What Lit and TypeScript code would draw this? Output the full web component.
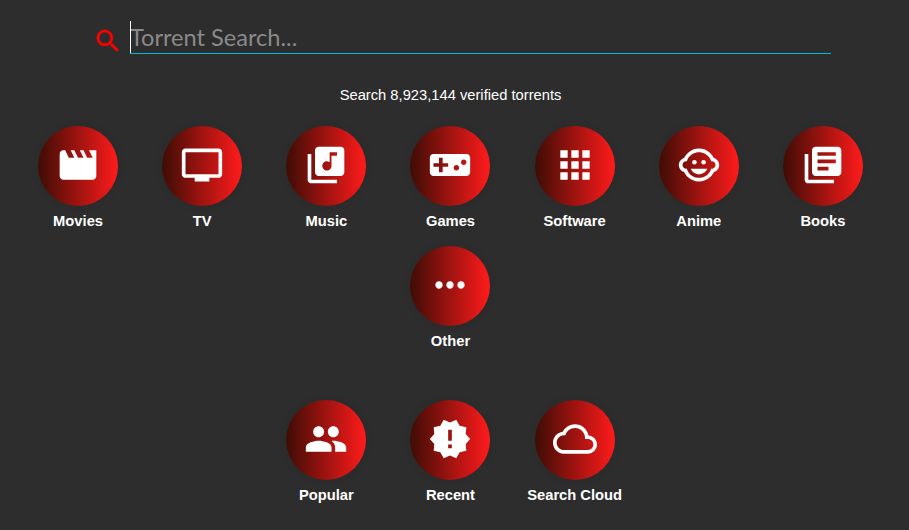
import { LitElement, html, css, svg } from "lit";
import { customElement } from "lit/decorators.js";

const P = {
  movie: svg`<path d="M18 4l2 4h-3l-2-4h-2l2 4h-3l-2-4H8l2 4H7L5 4H4c-1.1 0-1.99.9-1.99 2L2 18c0 1.1.9 2 2 2h16c1.1 0 2-.9 2-2V4h-4z"/>`,
  tv: svg`<path d="M21 3H3c-1.1 0-2 .9-2 2v12c0 1.1.9 2 2 2h5v2h8v-2h5c1.1 0 1.99-.9 1.99-2L23 5c0-1.1-.9-2-2-2zm0 14H3V5h18v12z"/>`,
  music: svg`<path d="M20 2H8c-1.1 0-2 .9-2 2v12c0 1.1.9 2 2 2h12c1.1 0 2-.9 2-2V4c0-1.1-.9-2-2-2zm-2 5h-3v5.5c0 1.38-1.12 2.5-2.5 2.5S10 13.88 10 12.5s1.12-2.5 2.5-2.5c.57 0 1.08.19 1.5.51V5h4v2zM4 6H2v14c0 1.1.9 2 2 2h14v-2H4V6z"/>`,
  games: svg`<path d="M21 6H3c-1.1 0-2 .9-2 2v8c0 1.1.9 2 2 2h18c1.1 0 2-.9 2-2V8c0-1.1-.9-2-2-2zm-10 7H8v3H6v-3H3v-2h3V8h2v3h3v2zm4.5 2c-.83 0-1.5-.67-1.5-1.5s.67-1.5 1.5-1.5 1.5.67 1.5 1.5-.67 1.5-1.5 1.5zm4-3c-.83 0-1.5-.67-1.5-1.5S18.67 9 19.5 9s1.5.67 1.5 1.5-.67 1.5-1.5 1.5z"/>`,
  apps: svg`<path d="M4 8h4V4H4v4zm6 12h4v-4h-4v4zm-6 0h4v-4H4v4zm0-6h4v-4H4v4zm6 0h4v-4h-4v4zm6-10v4h4V4h-4zm-6 4h4V4h-4v4zm6 6h4v-4h-4v4zm0 6h4v-4h-4v4z"/>`,
  child: svg`<circle cx="14.5" cy="10.5" r="1.25"/><circle cx="9.5" cy="10.5" r="1.25"/><path d="M22.94 12.66c.04-.21.06-.43.06-.66s-.02-.45-.06-.66c-.25-1.51-1.36-2.74-2.81-3.17-.53-1.12-1.28-2.1-2.19-2.91C16.36 3.85 14.28 3 12 3s-4.36.85-5.94 2.26c-.92.81-1.67 1.8-2.19 2.91-1.45.43-2.56 1.65-2.81 3.17-.04.21-.06.43-.06.66s.02.45.06.66c.25 1.51 1.36 2.74 2.81 3.17.52 1.11 1.27 2.09 2.17 2.89C7.62 20.14 9.71 21 12 21s4.38-.86 5.97-2.28c.9-.8 1.65-1.79 2.17-2.89 1.44-.43 2.55-1.65 2.8-3.17zM19 14c-.1 0-.19-.02-.29-.03-.2.67-.49 1.29-.86 1.86C16.6 17.74 14.45 19 12 19s-4.6-1.26-5.85-3.17c-.37-.57-.66-1.19-.86-1.86-.1.01-.19.03-.29.03-1.1 0-2-.9-2-2s.9-2 2-2c.1 0 .19.02.29.03.2-.67.49-1.29.86-1.86C7.4 6.26 9.55 5 12 5s4.6 1.26 5.85 3.17c.37.57.66 1.19.86 1.86.1-.01.19-.03.29-.03 1.1 0 2 .9 2 2s-.9 2-2 2zM7.5 14c.76 1.77 2.49 3 4.5 3s3.74-1.23 4.5-3h-9z"/>`,
  books: svg`<path d="M4 6H2v14c0 1.1.9 2 2 2h14v-2H4V6zm16-4H8c-1.1 0-2 .9-2 2v12c0 1.1.9 2 2 2h12c1.1 0 2-.9 2-2V4c0-1.1-.9-2-2-2zm-1 9H9V9h10v2zm-4 4H9v-2h6v2zm4-8H9V5h10v2z"/>`,
  more: svg`<path d="M6 10c-1.1 0-2 .9-2 2s.9 2 2 2 2-.9 2-2-.9-2-2-2zm12 0c-1.1 0-2 .9-2 2s.9 2 2 2 2-.9 2-2-.9-2-2-2zm-6 0c-1.1 0-2 .9-2 2s.9 2 2 2 2-.9 2-2-.9-2-2-2z"/>`,
  people: svg`<path d="M16 11c1.66 0 2.99-1.34 2.99-3S17.66 5 16 5c-1.66 0-3 1.34-3 3s1.34 3 3 3zm-8 0c1.66 0 2.99-1.34 2.99-3S9.66 5 8 5C6.34 5 5 6.34 5 8s1.34 3 3 3zm0 2c-2.33 0-7 1.17-7 3.5V19h14v-2.5c0-2.33-4.67-3.5-7-3.5zm8 0c-.29 0-.62.02-.97.05 1.16.84 1.97 1.97 1.97 3.45V19h6v-2.5c0-2.33-4.67-3.5-7-3.5z"/>`,
  fresh: svg`<path d="M23 12l-2.44-2.78.34-3.68-3.61-.82-1.89-3.18L12 3 8.6 1.54 6.71 4.72l-3.61.81.34 3.68L1 12l2.44 2.78-.34 3.69 3.61.82 1.89 3.18L12 21l3.4 1.46 1.89-3.18 3.61-.82-.34-3.68L23 12zm-10 5h-2v-2h2v2zm0-4h-2V7h2v6z"/>`,
  cloud: svg`<path d="M19.35 10.04C18.67 6.59 15.64 4 12 4 9.11 4 6.6 5.64 5.35 8.04 2.34 8.36 0 10.91 0 14c0 3.31 2.69 6 6 6h13c2.76 0 5-2.24 5-5 0-2.64-2.05-4.78-4.65-4.96zM19 18H6c-2.21 0-4-1.79-4-4s1.79-4 4-4h.71C7.37 7.69 9.48 6 12 6c3.04 0 5.5 2.46 5.5 5.5v.5H19c1.66 0 3 1.34 3 3s-1.34 3-3 3z"/>`,
};

const CATS: [string, keyof typeof P][] = [
  ["Movies", "movie"], ["TV", "tv"], ["Music", "music"], ["Games", "games"],
  ["Software", "apps"], ["Anime", "child"], ["Books", "books"], ["Other", "more"],
];
const EXTRA: [string, keyof typeof P][] = [
  ["Popular", "people"], ["Recent", "fresh"], ["Search Cloud", "cloud"],
];

@customElement("app-root")
export class AppRoot extends LitElement {
  static styles = css`
    :host {
      display: block;
      width: 909px;
      height: 530px;
      background: #2d2d2d;
      overflow: hidden;
      font-family: "Liberation Sans", Arial, sans-serif;
      color: #fff;
    }
    .page { width: 901px; padding: 21px 16px 0; box-sizing: border-box; }
    .search { display: flex; align-items: flex-start; margin-left: 77px; width: 738px; }
    .search-icon { width: 30px; height: 30px; fill: #ff0000; stroke: #ff0000; stroke-width: 0.25; margin-top: 5px; flex: none; margin-right: 7px; }
    .field { position: relative; flex: 1; height: 32px; border-bottom: 1px solid #00bcd4; }
    .field::before {
      content: ""; position: absolute; left: 0; top: 0; width: 1px; height: 32px; background: #fff;
    }
    input {
      display: block; width: 100%; height: 32px; padding: 0 0 1px; box-sizing: border-box; margin: 0; border: 0; outline: 0;
      background: transparent; color: #fff; font: 23.6px/30px Lato, sans-serif;
    }
    input::placeholder { color: #8a8a8a; opacity: 1; }
    .count { margin: 31px 0 0; text-align: center; font-size: 14.72px; line-height: 17px; height: 17px; }
    .grid { display: flex; flex-wrap: wrap; justify-content: center; margin-top: 22px; }
    .grid.extra { margin-top: 34px; }
    .item { width: calc(100% / 7); height: 120px; display: flex; flex-direction: column; align-items: center; }
    .circle {
      width: 80px; height: 80px; border-radius: 50%; flex: none;
      box-sizing: border-box; padding: 0 0 2px;
      background: linear-gradient(90deg, #3f0c05, #ff1b1b);
      display: flex; align-items: center; justify-content: center;
      box-shadow: 0 0 10px rgba(0, 0, 0, 0.08);
    }
    .circle svg { width: 44px; height: 44px; fill: #fff; display: block; }
    .label { margin-top: 7px; font-size: 14.72px; line-height: 17px; font-weight: 700; white-space: nowrap; }
  `;

  private item([label, icon]: [string, keyof typeof P]) {
    return html`<div class="item">
      <div class="circle"><svg viewBox="0 0 24 24">${P[icon]}</svg></div>
      <div class="label">${label}</div>
    </div>`;
  }

  render() {
    return html`<div class="page">
      <div class="search">
        <svg class="search-icon" viewBox="0 0 24 24"><path d="M15.5 14h-.79l-.28-.27C15.41 12.59 16 11.11 16 9.5 16 5.91 13.09 3 9.5 3S3 5.91 3 9.5 5.91 16 9.5 16c1.61 0 3.09-.59 4.23-1.57l.27.28v.79l5 4.99L20.49 19l-4.99-5zm-6 0C7.01 14 5 11.99 5 9.5S7.01 5 9.5 5 14 7.01 14 9.5 11.99 14 9.5 14z"/></svg>
        <div class="field"><input placeholder="Torrent Search..." /></div>
      </div>
      <p class="count">Search 8,923,144 verified torrents</p>
      <div class="grid">${CATS.map((c) => this.item(c))}</div>
      <div class="grid extra">${EXTRA.map((c) => this.item(c))}</div>
    </div>`;
  }
}
